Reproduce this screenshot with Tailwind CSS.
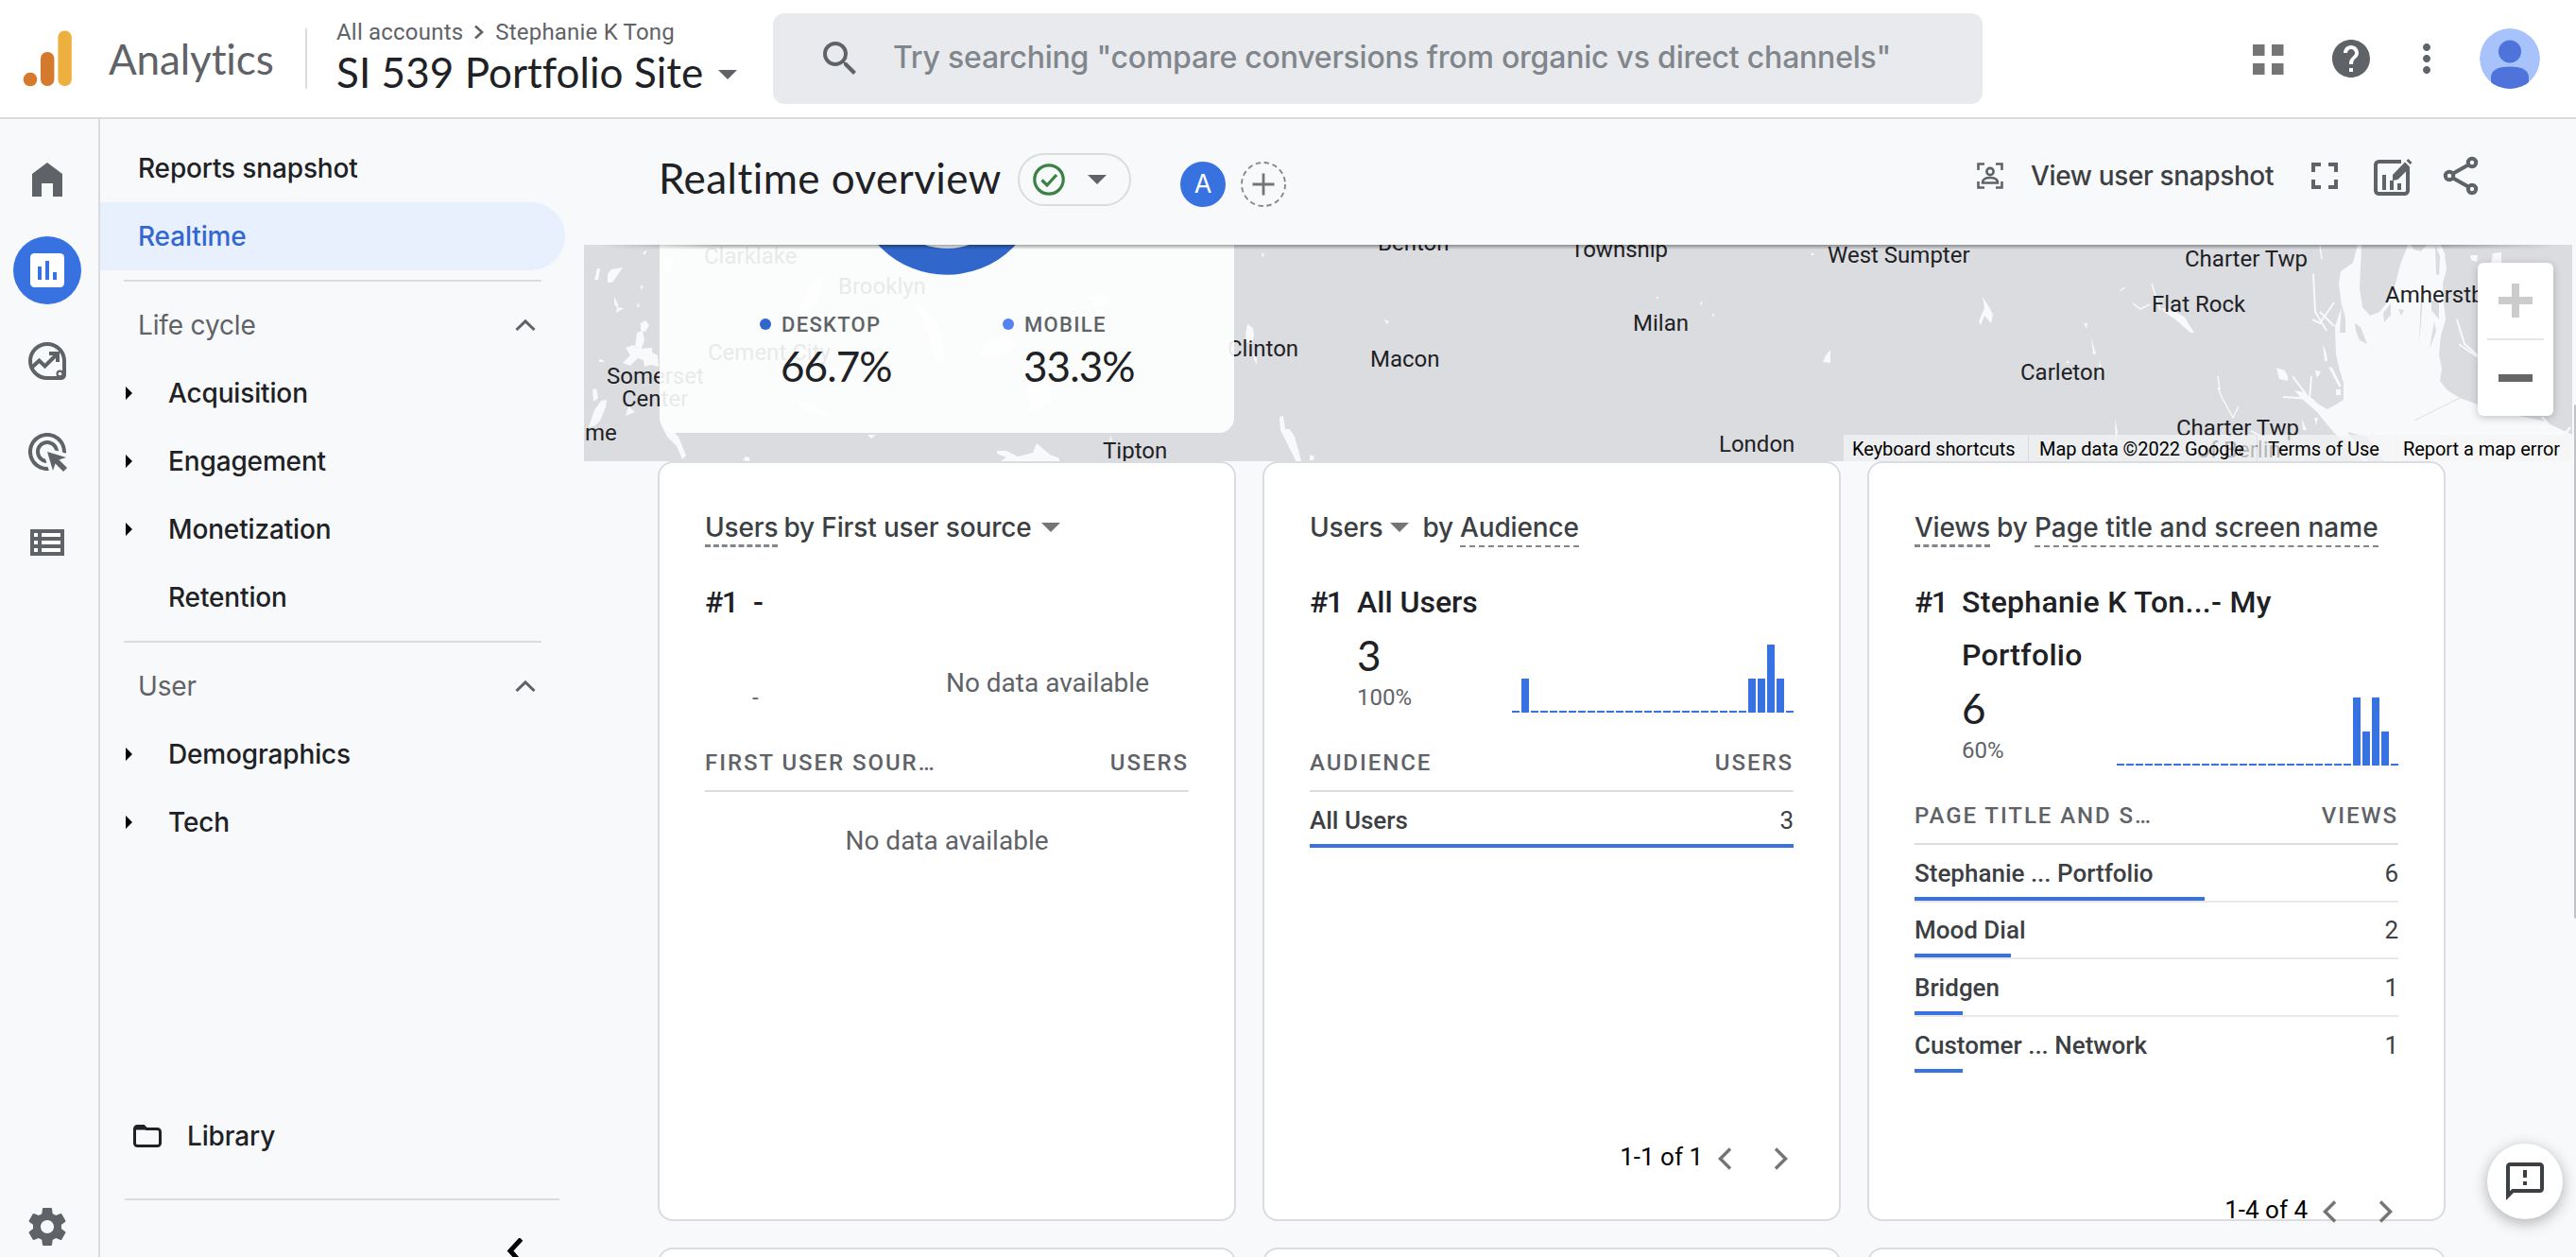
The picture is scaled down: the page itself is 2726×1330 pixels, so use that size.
<!DOCTYPE html>
<html lang="en">
<head>
<meta charset="utf-8">
<title>Analytics | Realtime overview</title>
<script src="https://cdn.jsdelivr.net/npm/@tailwindcss/browser@4"></script>
</head>
<body class="relative flex h-[1330px] w-[2726px] flex-col overflow-hidden bg-[#f8f9fb] font-[Roboto,sans-serif] whitespace-nowrap text-[#202124]">

<!-- Top bar -->
<header class="flex h-[126px] shrink-0 items-start border-b-2 border-[#dadce0] bg-white">
  <div class="flex h-[124px] w-[818px] items-center">
    <svg class="ml-6 h-16 w-13 shrink-0" viewBox="24 30 52 64"><circle cx="32" cy="84" r="7.3" fill="#d5792c"/><rect x="43" y="55" width="14.4" height="36" rx="7" fill="#d5792c"/><rect x="61.4" y="32.5" width="14.4" height="58.5" rx="7" fill="#edaf3e"/></svg>
    <div class="ml-[39px] w-[208px] font-[Lato,sans-serif] text-[44px] leading-[56px] tracking-[-0.1px] text-[#5f6368]">Analytics</div>
    <div class="h-16 w-0.5 bg-[#dadce0]"></div>
    <div class="ml-[31px] h-[84px]">
      <div class="flex h-7 items-center text-[24px] leading-7 tracking-[0.2px] text-[#5f6368]">All accounts
        <svg class="mx-[10px] size-3.5" viewBox="0 0 14 14" fill="none" stroke="#5f6368" stroke-width="2.6"><path d="M3 0.5L10 7L3 13.5"/></svg>Stephanie K Tong</div>
      <div class="mt-1 flex h-12 items-center font-[Lato,sans-serif] text-[44px] leading-[48px] tracking-[0.05px]">SI 539 Portfolio Site
        <svg class="mt-1.5 ml-4 h-2.5 w-5" viewBox="0 0 20 10" fill="#5f6368"><path d="M0 0h20L10 10z"/></svg></div>
    </div>
  </div>
  <div class="mt-3.5 flex h-24 w-[1280px] items-center rounded-xl bg-[#e8eaed]">
    <svg class="ml-[47px] size-12" viewBox="0 0 24 24" fill="#5f6368"><path d="M15.5 14h-.79l-.28-.27A6.47 6.47 0 0 0 16 9.5 6.5 6.5 0 1 0 9.5 16c1.61 0 3.09-.59 4.23-1.57l.27.28v.79l5 4.99L20.49 19l-4.99-5zm-6 0C7.01 14 5 11.99 5 9.5S7.01 5 9.5 5 14 7.01 14 9.5 11.99 14 9.5 14z"/></svg>
    <div class="ml-8 pb-0.5 font-[Inter,sans-serif] text-[32px] leading-10 font-medium tracking-[-0.22px] text-[#80868b]">Try searching "compare conversions from organic vs direct channels"</div>
  </div>
  <div class="ml-auto flex h-[124px] items-center pr-[38px]">
    <svg class="size-12" viewBox="0 0 48 48" fill="#757575"><path d="M8 9h12.5v12H8zM28 9h12.5v12H28zM8 29h12.5v12H8zM28 29h12.5v12H28z"/></svg>
    <svg class="ml-10 size-12" viewBox="0 0 24 24" fill="#5f6368"><path d="M12 2C6.48 2 2 6.48 2 12s4.48 10 10 10 10-4.48 10-10S17.52 2 12 2zm1 17h-2v-2h2v2zm2.07-7.75l-.9.92C13.45 12.9 13 13.5 13 15h-2v-.5c0-1.1.45-2.1 1.17-2.83l1.24-1.26c.37-.36.59-.86.59-1.41 0-1.1-.9-2-2-2s-2 .9-2 2H8c0-2.21 1.79-4 4-4s4 1.79 4 4c0 .88-.36 1.68-.93 2.25z"/></svg>
    <svg class="ml-8 size-12" viewBox="0 0 24 24" fill="#5f6368"><path d="M12 8c1.1 0 2-.9 2-2s-.9-2-2-2-2 .9-2 2 .9 2 2 2zm0 2c-1.1 0-2 .9-2 2s.9 2 2 2 2-.9 2-2-.9-2-2-2zm0 6c-1.1 0-2 .9-2 2s.9 2 2 2 2-.9 2-2-.9-2-2-2z"/></svg>
    <svg class="ml-8 size-16 rounded-full" viewBox="0 0 64 64"><circle cx="32" cy="32" r="32" fill="#a8c2fb"/><circle cx="32" cy="24.5" r="12" fill="#4e73db"/><path d="M12 64V52c0-7 6-11.500 20-11.500S52 45 52 52v12z" fill="#4e73db"/></svg>
  </div>
</header>

<div class="flex h-[1204px]">
  <!-- Icon rail -->
  <aside class="flex w-[106px] shrink-0 flex-col items-center border-r-2 border-[#dadce0] pt-4 pr-1">
    <div class="flex h-24 items-center"><svg class="size-12" viewBox="26 166 48 48" fill="#5f6368"><path d="M50 172l16 12v24H56v-14H44v14H34v-24z"/></svg></div>
    <div class="flex h-24 items-center"><div class="flex size-[72px] items-center justify-center rounded-full bg-[#3871e0]"><svg class="size-12" viewBox="0 0 48 48"><rect x="6" y="6" width="36" height="36" rx="4.500" fill="#fff"/><path d="M14 20h4v14h-4zM22 14h4v20h-4zM30 26h4v8h-4z" fill="#3871e0"/></svg></div></div>
    <div class="flex h-24 items-center"><svg class="size-12" viewBox="0 0 48 48" fill="none" stroke="#5f6368" stroke-width="4"><path d="M24 42A18 18 0 1 1 42 24V38.500A3.500 3.500 0 0 1 38.500 42z"/><path d="M7.500 31l8-7.500 6 6L33 18"/><path d="M26 16h9v9" stroke-width="4"/><circle cx="37.500" cy="37.500" r="4" fill="#5f6368" stroke="none"/><circle cx="37.500" cy="37.500" r="1.800" fill="#fff" stroke="none"/></svg></div>
    <div class="flex h-24 items-center"><svg class="size-12" viewBox="0 0 24 24" fill="#5f6368"><path d="M11.710 17.990A5.993 5.993 0 0 1 6 12c0-3.310 2.690-6 6-6 3.220 0 5.840 2.530 5.990 5.710l-2.100-.63a3.999 3.999 0 1 0-4.810 4.810l.63 2.100zM22 12c0 .3-.01.600-.04.900l-1.970-.590c.01-.1.010-.21.010-.310 0-4.420-3.580-8-8-8s-8 3.580-8 8 3.580 8 8 8c.1 0 .21 0 .310-.01l.590 1.970c-.3.030-.600.040-.900.040-5.520 0-10-4.480-10-10S6.480 2 12 2s10 4.480 10 10zm-3.770 4.260L22 15l-10-3 3 10 1.260-3.770 4.270 4.270 1.980-1.980-4.280-4.260z"/></svg></div>
    <div class="flex h-24 items-center"><svg class="size-12" viewBox="0 0 48 48"><rect x="6" y="10" width="36" height="28" fill="#5f6368"/><path d="M10 14h4v4h-4zM18 14h20v4H18zM10 22h4v4h-4zM18 22h20v4H18zM10 30h4v4h-4zM18 30h20v4H18z" fill="#fff"/></svg></div>
    <div class="mt-auto flex h-16 items-center"><svg class="size-12" viewBox="0 0 24 24" fill="#5f6368"><path d="M19.430 12.980c.04-.32.070-.64.070-.98s-.03-.66-.07-.98l2.110-1.650c.19-.15.240-.42.120-.64l-2-3.460c-.12-.22-.39-.3-.61-.22l-2.490 1c-.52-.4-1.080-.73-1.690-.98l-.38-2.650A.488.488 0 0 0 14 2h-4c-.25 0-.46.180-.49.420l-.38 2.650c-.61.250-1.170.590-1.690.980l-2.490-1c-.23-.09-.49 0-.61.220l-2 3.460c-.13.220-.07.490.120.640l2.110 1.650c-.04.320-.07.650-.07.980s.03.660.070.980l-2.110 1.650c-.19.150-.24.420-.12.640l2 3.460c.12.220.39.300.61.220l2.490-1c.52.400 1.080.730 1.690.980l.38 2.650c.03.240.240.420.490.420h4c.25 0 .46-.18.490-.42l.38-2.650c.61-.25 1.170-.59 1.690-.98l2.490 1c.23.090.49 0 .61-.22l2-3.460c.12-.22.070-.49-.12-.64l-2.110-1.650zM12 15.500c-1.930 0-3.500-1.570-3.500-3.500s1.570-3.500 3.500-3.500 3.500 1.570 3.500 3.500-1.570 3.500-3.500 3.500z"/></svg></div>
  </aside>

  <!-- Report navigation -->
  <nav class="flex w-[512px] shrink-0 flex-col overflow-hidden pt-4 font-[Inter,sans-serif] text-[28px] leading-9 font-medium tracking-[-0.15px]">
    <div class="flex h-[72px] shrink-0 items-center pl-10">Reports snapshot</div>
    <div class="flex h-[72px] w-[492px] shrink-0 items-center rounded-r-full bg-[#e8effd] pl-10 text-[#3367d0]">Realtime</div>
    <div class="my-2.5 ml-[25px] h-0.5 w-[442px] shrink-0 bg-[#dadce0]"></div>
    <div class="flex h-[72px] w-[461px] shrink-0 items-center justify-between pl-10 font-normal text-[#5f6368]">Life cycle
      <svg class="h-3 w-[22px]" viewBox="0 0 22 12" fill="none" stroke="#5f6368" stroke-width="3"><path d="M1.500 11L11 1.800L20.500 11"/></svg></div>
    <div class="flex h-[72px] shrink-0 items-center pl-[27px]"><svg class="mr-[38px] h-3.5 w-[7px]" viewBox="0 0 7 14"><path d="M0 0l7 7-7 7z"/></svg>Acquisition</div>
    <div class="flex h-[72px] shrink-0 items-center pl-[27px]"><svg class="mr-[38px] h-3.5 w-[7px]" viewBox="0 0 7 14"><path d="M0 0l7 7-7 7z"/></svg>Engagement</div>
    <div class="flex h-[72px] shrink-0 items-center pl-[27px]"><svg class="mr-[38px] h-3.5 w-[7px]" viewBox="0 0 7 14"><path d="M0 0l7 7-7 7z"/></svg>Monetization</div>
    <div class="flex h-[72px] shrink-0 items-center pl-[72px]">Retention</div>
    <div class="my-2.5 ml-[25px] h-0.5 w-[442px] shrink-0 bg-[#dadce0]"></div>
    <div class="flex h-[72px] w-[461px] shrink-0 items-center justify-between pl-10 font-normal text-[#5f6368]">User
      <svg class="h-3 w-[22px]" viewBox="0 0 22 12" fill="none" stroke="#5f6368" stroke-width="3"><path d="M1.500 11L11 1.800L20.500 11"/></svg></div>
    <div class="flex h-[72px] shrink-0 items-center pl-[27px]"><svg class="mr-[38px] h-3.5 w-[7px]" viewBox="0 0 7 14"><path d="M0 0l7 7-7 7z"/></svg>Demographics</div>
    <div class="flex h-[72px] shrink-0 items-center pl-[27px]"><svg class="mr-[38px] h-3.5 w-[7px]" viewBox="0 0 7 14"><path d="M0 0l7 7-7 7z"/></svg>Tech</div>
    <div class="mt-auto h-[164px] shrink-0">
      <div class="flex h-[72px] items-center pl-[35px]"><svg class="mr-[27px] h-6 w-[30px]" viewBox="0 0 30 24" fill="none" stroke="#202124" stroke-width="3"><path d="M1.500 4.500a3 3 0 0 1 3-3H11l3 3h11.500a3 3 0 0 1 3 3v12a3 3 0 0 1-3 3h-21a3 3 0 0 1-3-3z"/><path d="M2 3.500h11" stroke-width="4"/></svg>Library</div>
      <div class="mt-[30px] ml-[26px] h-0.5 w-[460px] bg-[#dadce0]"></div>
      <svg class="mt-10 ml-[430px] h-[30px] w-5" viewBox="0 0 20 30" fill="none" stroke="#000" stroke-width="5"><path d="M15.500 1L4 13.500l11.500 13"/></svg>
    </div>
  </nav>

  <main class="h-[1204px] w-[2108px] shrink-0 overflow-hidden">
    <!-- Report header -->
    <div class="flex h-[133px] items-start">
      <div class="flex h-[124px] w-full items-center pr-[98px] pl-[79px]">
        <h1 class="w-[380px] font-[Lato,sans-serif] text-[44px] leading-[56px] tracking-[0.45px]">Realtime overview</h1>
        <div class="mt-1 flex h-14 w-[120px] items-center rounded-full border-2 border-[#dadce0] pl-3.5">
          <svg class="size-[34px]" viewBox="0 0 34 34" fill="none" stroke="#3a8144" stroke-width="3.2"><circle cx="17" cy="17" r="15.200"/><path d="M9.500 17.500l5.500 5.500L25 12"/></svg>
          <svg class="ml-[24px] h-2.5 w-5" viewBox="0 0 20 10" fill="#5f6368"><path d="M0 0h20L10 10z"/></svg>
        </div>
        <div class="mt-3.5 ml-[52px] flex size-12 items-center justify-center rounded-full bg-[#3871e0] font-[Inter,sans-serif] text-[27px] text-white">A</div>
        <svg class="mt-3.5 ml-4 size-12" viewBox="0 0 48 48" fill="none"><circle cx="24" cy="24" r="23" stroke="#80868b" stroke-width="1.800" stroke-dasharray="5.400 3.630"/><path d="M24 12.500v23M12.500 24h23" stroke="#757575" stroke-width="2.800"/></svg>
        <div class="mb-1 ml-auto flex items-center">
          <svg class="mr-[29px] size-7" viewBox="0 0 28 28" fill="none" stroke="#5f6368" stroke-width="2.600"><path d="M1.500 8V1.500H8M20 1.500h6.500V8M26.500 20v6.500H20M8 26.500H1.500V20"/><circle cx="14" cy="9.500" r="3.600"/><path d="M6 21.500c0-4 3.500-5.500 8-5.500s8 1.500 8 5.500z"/></svg>
          <div class="w-[287px] font-[Inter,sans-serif] text-[28px] leading-9 font-medium tracking-[-0.37px] text-[#3c4043]">View user snapshot</div>
          <svg class="size-12" viewBox="0 0 24 24" fill="#5f6368"><path d="M7 14H5v5h5v-2H7v-3zm-2-4h2V7h3V5H5v5zm12 7h-3v2h5v-5h-2v3zM14 5v2h3v3h2V5h-5z"/></svg>
          <svg class="ml-6 size-12" viewBox="0 0 48 48"><path d="M33 9H9.500A3.500 3.500 0 0 0 6 12.500v27A3.500 3.500 0 0 0 9.500 43h27a3.500 3.500 0 0 0 3.500-3.500V16" fill="none" stroke="#5f6368" stroke-width="4"/><path d="M13 23h4v16h-4zM21 29h4v10h-4zM29 32h4v7h-4z" fill="#5f6368"/><path d="M24 29v-6L37 9.500l5.500 5.500L29.500 28z" fill="#5f6368"/><path d="M38.500 8l2-2 4 4-2 2z" fill="#5f6368"/></svg>
          <svg class="ml-6 size-12" viewBox="0 0 48 48" fill="none" stroke="#5f6368" stroke-width="4"><circle cx="36" cy="10" r="4.200"/><circle cx="36" cy="38" r="4.200"/><circle cx="12" cy="24" r="4.200"/><path d="M16 21.500L32 12.500M16 26.500l16 9"/></svg>
        </div>
      </div>
    </div>

    <!-- Map -->
    <section class="relative h-[229px] w-[2104px] overflow-hidden bg-[#dbdce0]">
      <svg class="absolute inset-0 h-full w-full" viewBox="618 259 2104 229">
        <!-- Detroit River and Lake Erie -->
        <path fill="#f8f9fb" d="M2495 259L2490 278 2477 287 2475 300 2478 325 2471 345 2472 375 2476 392 2480 405 2480 423 2472 428 2463 433 2447 424 2437 413 2428 400 2438 415 2428 413 2436 422 2452 436 2470 458 2486 470 2500 488H2722V460L2690 445 2665 440 2622 428 2603 421 2590 413 2582 403 2584 390 2581 375 2583 355 2588 338 2586 320 2585 300 2589 285 2587 268 2583 259H2548L2540 280 2535 300 2528 318 2518 330 2508 334 2500 325 2497 305 2499 259z"/>
        <path fill="#dbdce0" d="M2552 259h16l-6 7-8-2zM2577 259l5 12-1 20-3-1zM2573 318l8 0 0 20-8-10zM2478 322l4 15 0 15-6 0zM2492 342l6 4 7 18-8-4-4-10zM2522 331l8-10 0 12-7 8zM2538 327l6 1-3 6zM2576 340l-5 30 7-20zM2562 310l-2 55 4-50zM2484 457l20 5 12 14 6 12h-16l-10-16z"/>
        <path fill="none" stroke="#dbdce0" d="M2555 445l48-24M2500 308h7l5 18"/>
        <path fill="none" stroke="#f8f9fb" stroke-width="2" d="M2448 290l2 40 12 20M2470 320l-15 22-8-4M2455 330l15 15M2600 338l8 26 14 12M2602 364l20 14M2416 420l30 2 14 14M2426 398l18 24 2-24"/>
        <path fill="none" stroke="#f8f9fb" stroke-width="1.500" d="M2455 260l2 14M2257 321l8 6 10-5M2243 308l6-4M2277 300l9 28M2349 412l-2-14M2347 410l4 10 12 22 6-12M2382 456l8 4 0 10"/>
        <path fill="#f8f9fb" d="M2288 326l12 2 12 8 10 16-4 0-16-14-12-8zM2614 270l8 0-1 7-6-2zM2638 268l9-1 0 12-11 0zM2098 314l7 11 4 8-2 9-7-8-4 10-2-4 6-14zM2205 342h4l-1 6zM2213 357l5 18-3 0zM2221 380l5 17-4-4zM2188 381l2 3-4 0zM2238 443l3 14-2 10zM2409 389l9 3 3 6 0 5-9-2zM2450 392l6 1-4 7zM2464 388l4 1 10 20-3 0zM2458 364l4 10 1 8-3 0zM2472 412l5 0 0 6-5 0zM2436 443l5 12-4 0zM2449 442l4 0-2 8z"/>
        <path fill="none" stroke="#f8f9fb" stroke-width="2.500" d="M2690 441l8 10 10 4M2712 462l8-10"/>
        <!-- Inland lakes -->
        <path fill="#f8f9fb" d="M1320 343l6 4 1 8-2 8-6 -1-1-9zM1326 372l4 8 0 6-3-6zM1354 441l4-1 2 14 5 0 5 8 4 14 5 20-4 3-5-14-6-12-9-18zM1386 481l5 2-1 4-4 0zM1335 267l3 2-2 4zM1464 338l6 2-2 3zM1752 313l4 3-3 0zM1799 322l2-4 0 5zM1812 332l2 0-1 5zM1918 267l2 3-4 0zM1932 376l5-6 0 14-8-1zM627 412l4-1 2 10-5 4zM632 284l3 0-2 12-4 0zM643 290l4-5 12-2-4 6-7 10-5 0zM680 267l5-2-3 5zM677 302l4 1-2 4zM650 314l4 8 0 4-4-4zM653 325l7 1-8 5zM675 320l2 4-3 1zM678 342l5-3 4 5-4 7-5-1zM674 352l6-2 2 10-4 10-6-4zM662 368l8-3 6 4 14-1 0 8-7 6-8-3-8 8-8-3 8-8zM634 380l4 1 2 2-6 0zM680 375l8-3 8 4 1 12-9-2-6 2zM636 424l6-1 -1 8-6 14-6 6-6 1 6-18zM665 430l7 6-10 4zM700 450l8 2 10 10 8 20-4 4-6-14-10-10zM918 460l9 0-5 4zM786 487l3-4 4 1 0 4zM1055 477l10 0 12 6 16-4 4-10 14 12 10 4v3h-62l6-4-10-4zM1174 468l1-8 2 6z"/>
        <path fill="#f8f9fb" d="M858 300l10-8 2 12-8 20-12 10-6-6zM966 322l14 6 14 16 8 44-14-8-10-40zM700 270l14 4-4 14-8 0zM1150 314l20-3 4 10-16 4zM1045 360l22-8 12 14-20 10-24 2zM840 422l24 8 18 12-30-8zM1086 400l24-4 2 30-22 10zM860 392l24-4 20 10-30 8z" opacity=".8"/>
        <g font-family="Roboto, sans-serif" font-size="24" fill="#202124">
          <text x="745" y="279">Clarklake</text><text x="887" y="311">Brooklyn</text><text x="749" y="381">Cement City</text>
          <text x="642" y="406">Somerset</text><text x="658" y="430">Center</text><text x="619" y="466">me</text>
          <text x="1167" y="485">Tipton</text><text x="1299" y="377">Clinton</text><text x="1458" y="265">Benton</text>
          <text x="1662" y="272">Township</text><text x="1450" y="388">Macon</text><text x="1728" y="350">Milan</text>
          <text x="1819" y="478">London</text><text x="1934" y="278">West Sumpter</text><text x="2312" y="282">Charter Twp</text>
          <text x="2277" y="330">Flat Rock</text><text x="2138" y="402">Carleton</text><text x="2303" y="461">Charter Twp</text>
          <text x="2325" y="484">of Berlin</text><text x="2524" y="320">Amherstburg</text>
        </g>
      </svg>

      <!-- Device category overlay -->
      <div class="absolute top-0 left-20 h-[199px] w-[608px] rounded-b-2xl bg-white/90">
        <svg class="mx-auto h-8 w-[200px]" viewBox="0 0 200 32"><circle cx="100" cy="-67.500" r="85.300" fill="none" stroke="#3166cb" stroke-width="28"/></svg>
        <div class="mt-8 flex pl-[106px]">
          <div class="w-[257px]">
            <div class="flex h-10 items-center text-[22px] font-medium tracking-[1.300px] text-[#5f6368]"><span class="mr-[11px] size-3 rounded-full bg-[#3166cb]"></span>DESKTOP</div>
            <div class="pl-[22px] font-[Lato,sans-serif] text-[44px] leading-[48px] tracking-[-0.9px]">66.7%</div>
          </div>
          <div>
            <div class="flex h-10 items-center text-[22px] font-medium tracking-[1.300px] text-[#5f6368]"><span class="mr-[11px] size-3 rounded-full bg-[#5383ec]"></span>MOBILE</div>
            <div class="pl-[22px] font-[Lato,sans-serif] text-[44px] leading-[48px] tracking-[-0.9px]">33.3%</div>
          </div>
        </div>
      </div>

      <!-- Zoom control -->
      <div class="absolute top-[19px] left-[2004px] flex h-[162px] w-20 flex-col items-center rounded-md bg-white shadow-[0_2px_8px_rgba(0,0,0,0.22)]">
        <svg class="h-20 w-20" viewBox="0 0 80 80"><path d="M36 22h8v14h14v8H44v14h-8V44H22v-8h14z" fill="#ccc"/></svg>
        <div class="h-0.5 w-15 bg-[#e6e6e6]"></div>
        <svg class="h-20 w-20" viewBox="0 0 80 80"><path d="M22 36h36v8H22z" fill="#666"/></svg>
      </div>

      <!-- Attribution -->
      <div class="absolute right-0 bottom-0 flex h-7 gap-px text-[20px] leading-[30px] tracking-[-0.05px] text-black">
        <div class="w-[195px] bg-[#f5f5f5]/70 pl-[9px]">Keyboard shortcuts</div>
        <div class="w-[241px] bg-[#f5f5f5]/70 pl-[11px]">Map data ©2022 Google</div>
        <div class="w-[142px] bg-[#f5f5f5]/70 pl-[11px]">Terms of Use</div>
        <div class="w-[190px] bg-[#f5f5f5]/70 pl-[11px]">Report a map error</div>
      </div>

      <!-- Header shadow -->
      <div class="absolute inset-x-0 top-0 h-[5px] bg-gradient-to-b from-black/35 to-transparent [mask-image:linear-gradient(to_right,transparent_20px,black_140px,black_1960px,transparent_2090px)]"></div>
    </section>

    <!-- Cards -->
    <section class="ml-[78px] grid w-[1892px] grid-cols-3 grid-rows-[804px_804px] gap-7">

      <article class="rounded-2xl border-2 border-[#dadce0] bg-white px-12 pt-[49px]">
        <div class="flex h-9 items-start font-[Inter,sans-serif] text-[28px] leading-[38px] font-medium tracking-[-0.150px] text-[#3c4043]">
          <span class="h-10 border-b-[3px] border-dashed border-[#80868b]">Users</span><span class="ml-[6px]">by First user source</span>
          <svg class="mt-3.5 ml-[10px] h-2.5 w-5" viewBox="0 0 20 10" fill="#757575"><path d="M0 0h20L10 10z"/></svg>
        </div>
        <div class="mt-[34px] flex text-[32px] leading-[56px] font-medium"><span class="w-[51px] tracking-[-1.500px]">#1</span><span>-</span></div>
        <div class="flex h-[110px] justify-between pr-[42px] pl-[50px]">
          <div class="pt-[57px] text-[24px] leading-8 text-[#5f6368]">-</div>
          <div class="pt-[40px] text-[28px] leading-9 text-[#5f6368]">No data available</div>
        </div>
        <div class="flex h-[63px] items-center justify-between border-b-2 border-[#dadce0] pt-0.5 text-[24px] font-medium text-[#5f6368]"><span class="tracking-[1.950px]">FIRST USER SOUR…</span><span class="tracking-[1.950px]">USERS</span></div>
        <div class="pt-[34px] text-center text-[28px] leading-9 text-[#5f6368]">No data available</div>
      </article>

      <article class="rounded-2xl border-2 border-[#dadce0] bg-white px-12 pt-[49px]">
        <div class="flex h-9 items-start font-[Inter,sans-serif] text-[28px] leading-[38px] font-medium tracking-[-0.150px] text-[#3c4043]">
          <span>Users</span>
          <svg class="mt-3.5 ml-[8px] h-2.5 w-5" viewBox="0 0 20 10" fill="#757575"><path d="M0 0h20L10 10z"/></svg>
          <span class="ml-[14px]">by</span><span class="ml-[7px] h-10 border-b-2 border-dashed border-[#80868b]">Audience</span>
        </div>
        <div class="mt-[34px] flex text-[32px] leading-[56px] font-medium"><span class="w-[50px] tracking-[-1.500px]">#1</span><span>All Users</span></div>
        <div class="flex h-[110px] justify-between pl-[50px]">
          <div><div class="font-[Lato,sans-serif] text-[44px] leading-[56px]">3</div><div class="text-[24px] leading-[34px] text-[#5f6368]">100%</div></div>
          <div class="flex h-[89px] items-end gap-0.5" data-bars="1,18,1,1,1,1,1,1,1,1,1,1,1,1,1,1,1,1,1,1,1,1,1,1,1,18,18,36,18,1"></div>
        </div>
        <div class="flex h-[63px] items-center justify-between border-b-2 border-[#dadce0] pt-0.5 text-[24px] font-medium tracking-[1.950px] text-[#5f6368]"><span>AUDIENCE</span><span>USERS</span></div>
        <div class="h-[356px] text-[26px] text-[#3c4043]">
          <div class="relative flex h-[60.67px] items-center justify-between border-b-2 border-transparent pt-0.5"><span class="font-medium">All Users</span><span>3</span><div class="absolute bottom-0 left-0 h-1 bg-[#3871e0]" style="width:100%"></div></div>
        </div>
        <div class="flex h-16 items-center justify-end text-[26px] text-black">
          <span class="pb-1">1-1 of 1</span>
          <svg class="ml-[15px] h-6 w-4" viewBox="0 0 16 24" fill="none" stroke="#757575" stroke-width="3.500"><path d="M14 1.500L3.500 12L14 22.500"/></svg>
          <svg class="mr-[5px] ml-[44px] h-6 w-4" viewBox="0 0 16 24" fill="none" stroke="#757575" stroke-width="3.500"><path d="M2 1.500L12.500 12L2 22.500"/></svg>
        </div>
      </article>

      <article class="rounded-2xl border-2 border-[#dadce0] bg-white px-12 pt-[49px]">
        <div class="flex h-9 items-start font-[Inter,sans-serif] text-[28px] leading-[38px] font-medium tracking-[0.050px] text-[#3c4043]">
          <span class="h-10 border-b-[3px] border-dashed border-[#80868b] tracking-[-0.250px]">Views</span><span class="ml-[7px]">by</span><span class="ml-[7px] h-10 border-b-2 border-dashed border-[#80868b]">Page title and screen name</span>
        </div>
        <div class="mt-[34px] flex text-[32px] leading-[56px] font-medium tracking-[0.300px]"><span class="w-[50px] tracking-[-1.500px]">#1</span><span>Stephanie K Ton...- My<br>Portfolio</span></div>
        <div class="flex h-[110px] justify-between pl-[50px]">
          <div><div class="font-[Lato,sans-serif] text-[44px] leading-[56px]">6</div><div class="text-[24px] leading-[34px] text-[#5f6368]">60%</div></div>
          <div class="flex h-[89px] items-end gap-0.5" data-bars="1,1,1,1,1,1,1,1,1,1,1,1,1,1,1,1,1,1,1,1,1,1,1,1,1,36,18,36,18,1"></div>
        </div>
        <div class="flex h-[63px] items-center justify-between border-b-2 border-[#dadce0] pt-0.5 text-[24px] font-medium tracking-[1.950px] text-[#5f6368]"><span>PAGE TITLE AND S…</span><span>VIEWS</span></div>
        <div class="h-[356px] text-[26px] text-[#3c4043]">
          <div class="relative flex h-[60.67px] items-center justify-between border-b-2 border-[#e8e8e8] pt-0.5"><span class="font-medium">Stephanie ... Portfolio</span><span>6</span><div class="absolute bottom-0 left-0 h-1 bg-[#3871e0]" style="width:60%"></div></div>
          <div class="relative flex h-[60.67px] items-center justify-between border-b-2 border-[#e8e8e8] pt-0.5"><span class="font-medium">Mood Dial</span><span>2</span><div class="absolute bottom-0 left-0 h-1 bg-[#3871e0]" style="width:20%"></div></div>
          <div class="relative flex h-[60.67px] items-center justify-between border-b-2 border-[#e8e8e8] pt-0.5"><span class="font-medium">Bridgen</span><span>1</span><div class="absolute bottom-0 left-0 h-1 bg-[#3871e0]" style="width:10%"></div></div>
          <div class="relative flex h-[60.67px] items-center justify-between border-b-2 border-transparent pt-0.5"><span class="font-medium">Customer ... Network</span><span>1</span><div class="absolute bottom-0 left-0 h-1 bg-[#3871e0]" style="width:10%"></div></div>
        </div>
        <div class="flex h-16 items-center justify-end text-[26px] text-black">
          <span class="pb-1">1-4 of 4</span>
          <svg class="ml-[15px] h-6 w-4" viewBox="0 0 16 24" fill="none" stroke="#757575" stroke-width="3.500"><path d="M14 1.500L3.500 12L14 22.500"/></svg>
          <svg class="mr-[5px] ml-[44px] h-6 w-4" viewBox="0 0 16 24" fill="none" stroke="#757575" stroke-width="3.500"><path d="M2 1.500L12.500 12L2 22.500"/></svg>
        </div>
      </article>

      <article class="rounded-2xl border-2 border-[#dadce0] bg-white"></article>
      <article class="rounded-2xl border-2 border-[#dadce0] bg-white"></article>
      <article class="rounded-2xl border-2 border-[#dadce0] bg-white"></article>
    </section>
  </main>
</div>

<!-- Scrollbar thumb -->
<div class="absolute top-[428px] right-0 h-[544px] w-0.5 rounded-l bg-[#c1c3c6]"></div>

<!-- Feedback button -->
<button class="absolute top-[1210px] left-[2632px] flex size-20 items-center justify-center rounded-full bg-white shadow-[0_4px_16px_rgba(0,0,0,0.3)]">
  <svg class="size-12" viewBox="0 0 24 24" fill="#3c4043"><path d="M20 2H4c-1.100 0-1.990.900-1.990 2L2 22l4-4h14c1.100 0 2-.9 2-2V4c0-1.100-.9-2-2-2zm0 14H5.170L4 17.170V4h16v12zM11 12h2v2h-2zm0-6h2v4h-2z"/></svg>
</button>

<script>
  // One bar per minute over the last half hour
  document.querySelectorAll('[data-bars]').forEach(function (chart) {
    chart.innerHTML = chart.dataset.bars.split(',').map(function (v) {
      return '<div class="w-2 bg-[#3871e0]" style="height:' + v * 2 + 'px"></div>';
    }).join('');
  });
</script>
</body>
</html>
